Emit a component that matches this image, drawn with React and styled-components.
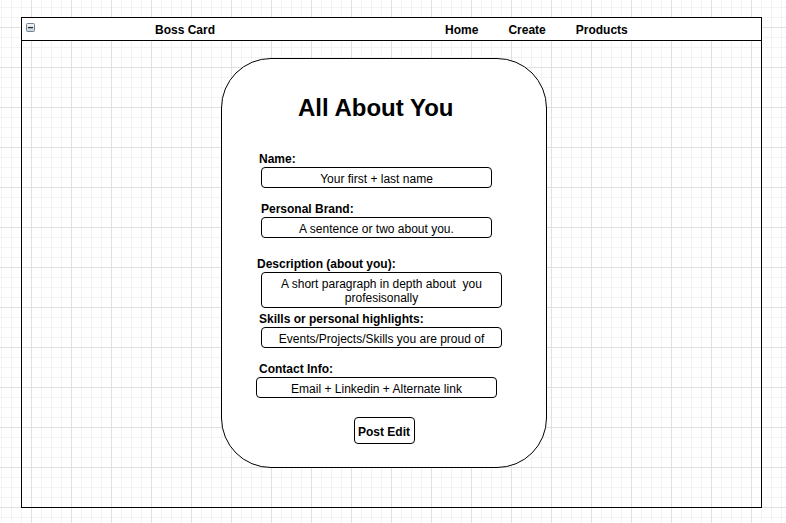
import React from "react";
import styled, { createGlobalStyle } from "styled-components";

const GlobalStyle = createGlobalStyle`
  html, body {
    margin: 0;
    padding: 0;
  }

  body {
    min-height: 523px;
    font-family: "Liberation Sans", Arial, Helvetica, sans-serif;
    color: #000;
    background-color: #fff;
    /* draw.io style grid: fine lines every 10px, heavier every 40px */
    background-image:
      linear-gradient(to right, #e0e0e0 1px, transparent 1px),
      linear-gradient(to bottom, #e0e0e0 1px, transparent 1px),
      linear-gradient(to right, #f3f3f3 1px, transparent 1px),
      linear-gradient(to bottom, #f3f3f3 1px, transparent 1px);
    background-size: 40px 40px, 40px 40px, 10px 10px, 10px 10px;
    background-position: 31px 27px, 31px 27px, 1px 7px, 1px 7px;
  }
`;

const Page = styled.div`
  padding: 17px 0 0 21px;
`;

const Frame = styled.div`
  width: 741px;
  height: 491px;
  box-sizing: border-box;
  border: 1px solid #000;
  display: flex;
  flex-direction: column;
`;

const Header = styled.header`
  height: 23px;
  box-sizing: border-box;
  border-bottom: 1px solid #000;
  background: #fff;
  display: flex;
  align-items: center;
  padding-top: 2px;
`;

const Collapse = styled.svg`
  width: 9px;
  height: 9px;
  margin-left: 4px;
  align-self: flex-start;
  margin-top: 3px;
  flex-shrink: 0;
`;

const Brand = styled.div`
  margin-left: 120px;
  font-size: 12px;
  font-weight: bold;
  line-height: 14px;
`;

const Nav = styled.nav`
  margin-left: 230px;
  display: flex;
  gap: 30px;
`;

const NavLink = styled.a`
  font-size: 12px;
  font-weight: bold;
  line-height: 14px;
  color: #000;
  text-decoration: none;
`;

const Card = styled.section`
  margin: 17px 0 0 199px;
  width: 326px;
  height: 410px;
  box-sizing: border-box;
  border: 1px solid #000;
  border-radius: 50px;
  background: #fff;
  padding-top: 35px;
  display: flex;
  flex-direction: column;
  align-items: flex-start;
`;

const Title = styled.h1`
  margin: 0 0 0 76px;
  font-size: 24px;
  line-height: 28px;
  font-weight: bold;
`;

const Field = styled.div`
  margin-top: ${(p) => p.$top}px;
  display: flex;
  flex-direction: column;
  align-items: flex-start;
`;

const Label = styled.label`
  margin-left: ${(p) => p.$indent}px;
  padding-top: 1px;
  font-size: 12px;
  font-weight: bold;
  line-height: 14px;
`;

const InputBox = styled.div`
  margin: 1px 0 0 ${(p) => p.$indent}px;
  width: ${(p) => p.$width}px;
  height: ${(p) => p.$height || 21}px;
  box-sizing: border-box;
  border: 1px solid #000;
  border-radius: 4px;
  background: #fff;
  display: flex;
  align-items: center;
  justify-content: center;
  text-align: center;
  font-size: 12px;
  line-height: 14px;
  padding: 2px 6px 0;
`;

const PostButton = styled.button`
  margin-top: 19px;
  align-self: center;
  width: 61px;
  height: 27px;
  box-sizing: border-box;
  border: 1px solid #000;
  border-radius: 4px;
  background: #fff;
  font-family: inherit;
  font-size: 12px;
  font-weight: bold;
  color: #000;
  padding: 2px 0 0;
`;

const fields = [
  { label: "Name:", text: "Your first + last name", top: 29, labelX: 37, boxX: 39, width: 231 },
  { label: "Personal Brand:", text: "A sentence or two about you.", top: 13, labelX: 39, boxX: 39, width: 231 },
  {
    label: "Description (about you):",
    text: "A short paragraph in depth about\u00a0 you profesisonally",
    top: 18,
    labelX: 35,
    boxX: 39,
    width: 241,
    height: 36,
  },
  { label: "Skills or personal highlights:", text: "Events/Projects/Skills you are proud of", top: 3, labelX: 37, boxX: 39, width: 241 },
  { label: "Contact Info:", text: "Email + Linkedin + Alternate link", top: 13, labelX: 37, boxX: 34, width: 241 },
];

function App() {
  return (
    <>
      <GlobalStyle />
      <Page>
        <Frame>
          <Header>
            <Collapse viewBox="0 0 9 9">
              <defs>
                <linearGradient id="collapseFill" x1="0" y1="0" x2="0" y2="1">
                  <stop offset="0" stopColor="#f4f6f8" />
                  <stop offset="1" stopColor="#c9d1da" />
                </linearGradient>
              </defs>
              <rect x="0.5" y="0.5" width="8" height="8" rx="1" fill="url(#collapseFill)" stroke="#6f8296" />
              <rect x="2" y="4" width="5" height="1.2" fill="#222" />
            </Collapse>
            <Brand>Boss Card</Brand>
            <Nav>
              <NavLink>Home</NavLink>
              <NavLink>Create</NavLink>
              <NavLink>Products</NavLink>
            </Nav>
          </Header>

          <Card>
            <Title>All About You</Title>
            {fields.map((f) => (
              <Field key={f.label} $top={f.top}>
                <Label $indent={f.labelX}>{f.label}</Label>
                <InputBox $indent={f.boxX} $width={f.width} $height={f.height}>
                  {f.text}
                </InputBox>
              </Field>
            ))}
            <PostButton>Post Edit</PostButton>
          </Card>
        </Frame>
      </Page>
    </>
  );
}

export default App;
